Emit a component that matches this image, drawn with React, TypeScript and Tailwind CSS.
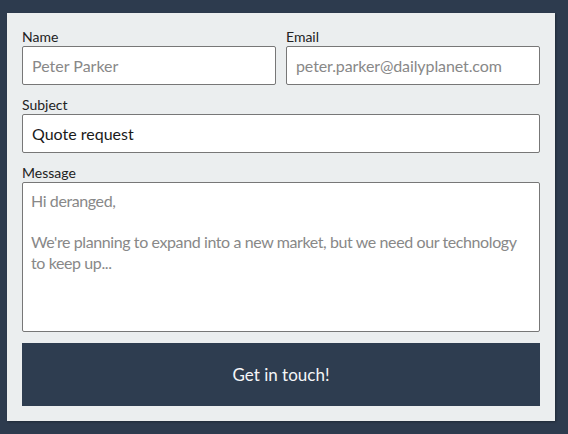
import * as React from "react";

const font = { fontFamily: '"Lato", "Liberation Sans", sans-serif' };

export default function App() {
  return (
    <section
      className="min-h-screen w-full bg-[#2d3b4e] pt-[13px] pl-[7px] pr-[13px] pb-[13px]"
      style={font}
    >
      <form
        className="flex w-[548px] flex-col gap-[11px] bg-[#ebeeef] p-[15px] shadow-[1px_1px_2px_rgba(0,0,0,0.3)]"
        onSubmit={(e) => e.preventDefault()}
      >
        <div className="flex gap-[10px]">
          <label className="flex flex-1 flex-col">
            <span className="h-[18px] text-[14px] leading-[18px] text-[#222]">Name</span>
            <input
              className="h-[39px] w-full rounded-[2px] border border-[#777] bg-white px-[9px] text-[16px] text-[#222] placeholder:text-[#888] outline-none"
              placeholder="Peter Parker"
            />
          </label>
          <label className="flex flex-1 flex-col">
            <span className="h-[18px] text-[14px] leading-[18px] text-[#222]">Email</span>
            <input
              className="h-[39px] w-full rounded-[2px] border border-[#777] bg-white px-[9px] text-[16px] tracking-[-0.1px] text-[#222] placeholder:text-[#888] outline-none"
              placeholder="peter.parker@dailyplanet.com"
            />
          </label>
        </div>

        <label className="flex flex-col">
          <span className="h-[18px] text-[14px] leading-[18px] text-[#222]">Subject</span>
          <input
            className="h-[39px] w-full rounded-[2px] border border-[#777] bg-white px-[9px] text-[16px] text-[#1a1a1a] outline-none"
            defaultValue="Quote request"
          />
        </label>

        <label className="flex flex-col">
          <span className="h-[18px] text-[14px] leading-[18px] text-[#222]">Message</span>
          <textarea
            className="h-[150px] w-full resize-none rounded-[2px] border border-[#777] bg-white px-[8px] py-[8px] text-[16px] leading-[20.5px] tracking-[-0.4px] text-[#222] placeholder:text-[#888] outline-none"
            placeholder={
              "Hi deranged,\n\nWe're planning to expand into a new market, but we need our technology to keep up..."
            }
          />
        </label>

        <button
          type="submit"
          className="h-[63px] w-full bg-[#2e3d50] text-[17px] text-[#f4f6f8]"
        >
          Get in touch!
        </button>
      </form>
    </section>
  );
}
